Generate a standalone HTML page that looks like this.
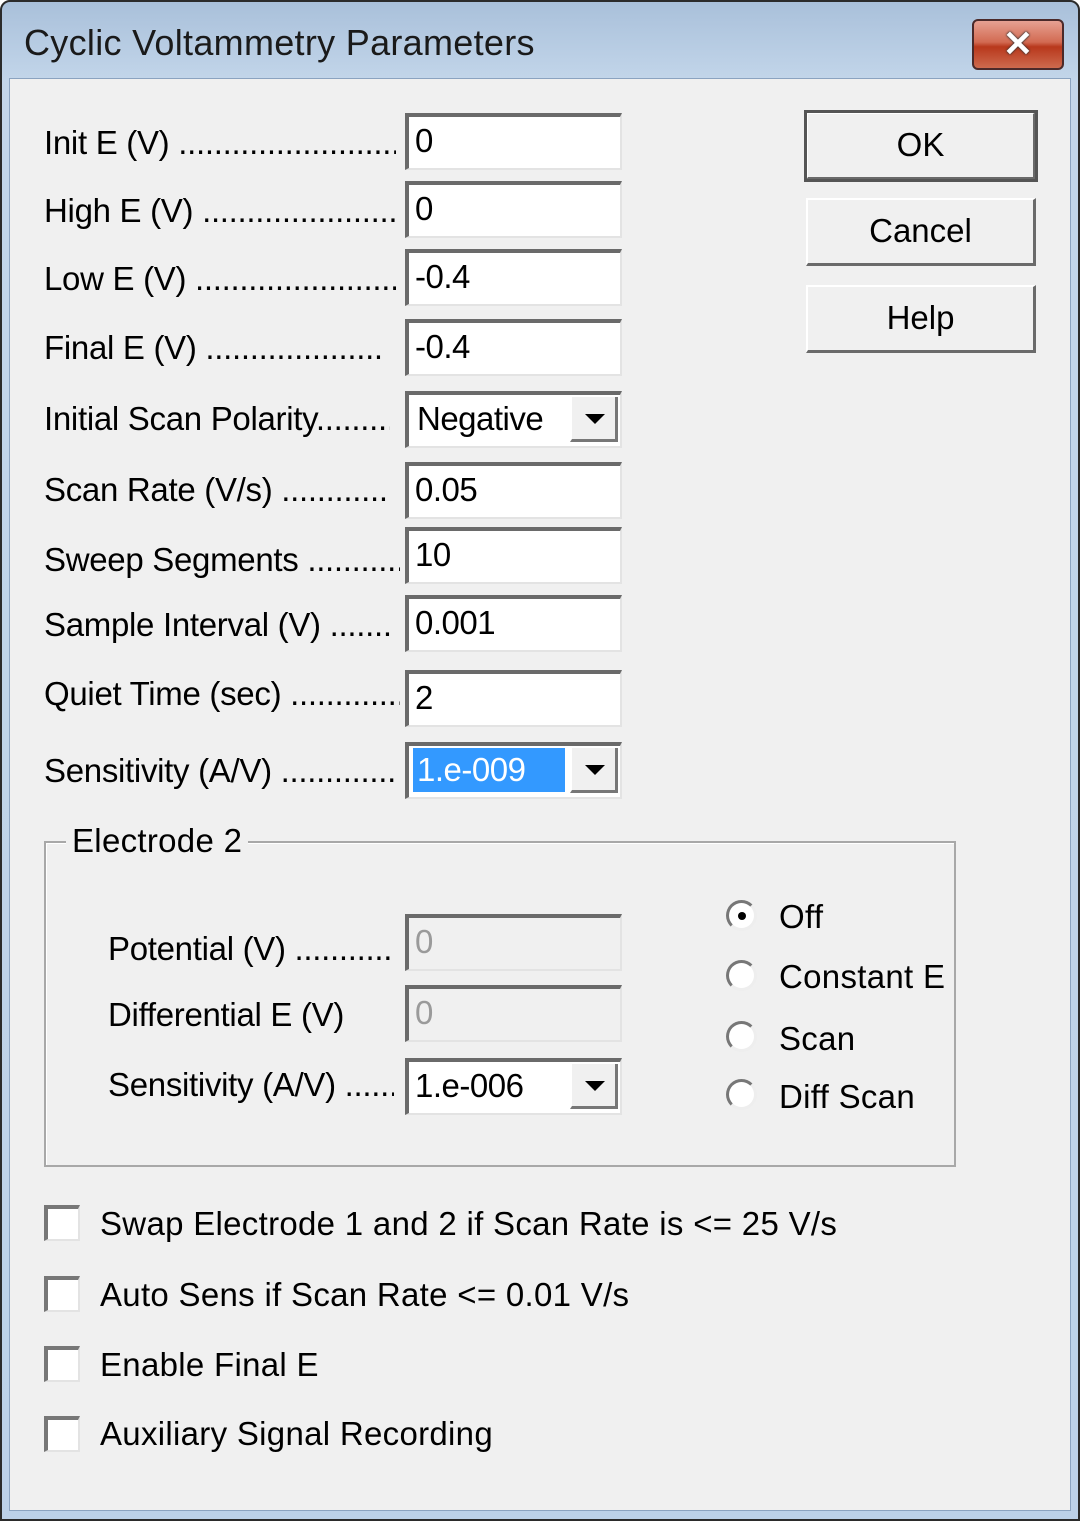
<!DOCTYPE html>
<html><head><style>
*{margin:0;padding:0;box-sizing:border-box}
body{width:1080px;height:1521px;background:#fff;position:relative;overflow:hidden;font-family:"Liberation Sans",sans-serif;color:#000}
.win{position:absolute;left:0;top:0;width:1080px;height:1521px;border:2px solid #2b2b2b;border-radius:10px 10px 0 0;background:linear-gradient(#a9c0da,#c3d6ea 80px,#bcd1e8);}
.title{position:absolute;left:22px;top:20px;font-size:36px;color:#1a1a1a;letter-spacing:0.3px}
.close{position:absolute;left:970px;top:17px;width:92px;height:51px;border:2px solid #4b2a2a;border-radius:6px;background:linear-gradient(#e7a192,#d26a52 45%,#b8381c 55%,#cd6a4e);color:#fff;font-size:36px;font-weight:bold;text-align:center;line-height:46px;text-shadow:0 0 2px #333,0 0 2px #333}
.client{position:absolute;left:9px;top:78px;width:1062px;height:1433px;background:#f0f0f0;border:1px solid #8ba3c0}
.t{position:absolute;font-size:33px;white-space:nowrap;letter-spacing:0.3px}
.lab{position:absolute;left:44px;width:352px;font-size:33px;white-space:nowrap;overflow:hidden;letter-spacing:-0.3px}
.in{position:absolute;left:405px;width:217px;height:57px;background:#fff;border-top:4px solid #6a6a6a;border-left:4px solid #6a6a6a;border-right:2px solid #e3e3e3;border-bottom:2px solid #e3e3e3;font-size:33px;padding-left:6px;line-height:48px;letter-spacing:-0.5px}
.dis{background:#f0f0f0;color:#9a9a9a}
.arr{position:absolute;right:2px;top:2px;width:48px;height:45px;background:#f0f0f0;border-left:2px solid #fff;border-bottom:3px solid #777;border-right:3px solid #777}
.arr:after{content:"";position:absolute;left:13px;top:17px;border-left:10px solid transparent;border-right:10px solid transparent;border-top:10px solid #000}
.btn{position:absolute;left:806px;width:230px;height:68px;background:#f0f0f0;border-top:2px solid #fff;border-left:2px solid #fff;border-right:3px solid #6a6a6a;border-bottom:3px solid #6a6a6a;text-align:center;font-size:33px;line-height:62px}
.ok{outline:3px solid #555;outline-offset:-1px}
.group{position:absolute;left:44px;top:841px;width:912px;height:326px;border:2px solid #a8a8a8;box-shadow:inset 1px 1px #fff}
.rad{position:absolute;left:726px;width:31px;height:31px;border-radius:50%;background:#fff;border:3px solid #777;border-right-color:#eee;border-bottom-color:#eee}
.cb{position:absolute;left:44px;width:36px;height:36px;background:#fff;border-top:4px solid #777;border-left:4px solid #777;border-right:2px solid #e3e3e3;border-bottom:2px solid #e3e3e3}
</style></head><body>
<div class="win">
<div class="title">Cyclic Voltammetry Parameters</div>
<div class="close">✕</div>
</div>
<div class="client"></div>

<div class="lab" style="top:124px">Init E (V) ................................</div>
<div class="lab" style="top:192px">High E (V) ..............................</div>
<div class="lab" style="top:260px">Low E (V) ...............................</div>
<div class="lab" style="top:329px;width:340px">Final E (V) .............................</div>
<div class="lab" style="top:400px;width:346px">Initial Scan Polarity................</div>
<div class="lab" style="top:471px;width:346px">Scan Rate (V/s) .......................</div>
<div class="lab" style="top:541px;width:356px">Sweep Segments ......................</div>
<div class="lab" style="top:606px;width:346px">Sample Interval (V) ..................</div>
<div class="lab" style="top:675px;width:356px">Quiet Time (sec) ......................</div>
<div class="lab" style="top:752px;width:350px">Sensitivity (A/V) ......................</div>

<div class="in" style="top:113px">0</div>
<div class="in" style="top:181px">0</div>
<div class="in" style="top:249px">-0.4</div>
<div class="in" style="top:319px">-0.4</div>
<div class="in" style="top:391px;padding-left:8px">Negative<div class="arr"></div></div>
<div class="in" style="top:462px">0.05</div>
<div class="in" style="top:527px">10</div>
<div class="in" style="top:595px">0.001</div>
<div class="in" style="top:670px">2</div>
<div class="in" style="top:742px;padding:2px 0 0 4px"><div style="background:#3399ff;color:#fff;width:152px;height:44px;line-height:44px;padding-left:4px">1.e-009</div><div class="arr"></div></div>

<div class="btn ok" style="top:112px">OK</div>
<div class="btn" style="top:198px">Cancel</div>
<div class="btn" style="top:285px">Help</div>

<div class="group"></div>
<div class="t" style="left:66px;top:822px;background:#f0f0f0;padding:0 6px">Electrode 2</div>
<div class="lab" style="left:108px;width:286px;top:930px">Potential (V) ...........................</div>
<div class="lab" style="left:108px;width:286px;top:996px">Differential E (V)</div>
<div class="lab" style="left:108px;width:286px;top:1066px">Sensitivity (A/V) ......................</div>
<div class="in dis" style="top:914px">0</div>
<div class="in dis" style="top:985px">0</div>
<div class="in" style="top:1058px">1.e-006<div class="arr"></div></div>

<div class="rad" style="top:900px"><div style="position:absolute;left:9px;top:9px;width:8px;height:8px;border-radius:50%;background:#000"></div></div>
<div class="rad" style="top:960px"></div>
<div class="rad" style="top:1021px"></div>
<div class="rad" style="top:1079px"></div>
<div class="t" style="left:779px;top:898px">Off</div>
<div class="t" style="left:779px;top:958px">Constant E</div>
<div class="t" style="left:779px;top:1020px">Scan</div>
<div class="t" style="left:779px;top:1078px">Diff Scan</div>

<div class="cb" style="top:1205px"></div>
<div class="cb" style="top:1276px"></div>
<div class="cb" style="top:1346px"></div>
<div class="cb" style="top:1416px"></div>
<div class="t" style="left:100px;top:1205px">Swap Electrode 1 and 2 if Scan Rate is &lt;= 25 V/s</div>
<div class="t" style="left:100px;top:1276px">Auto Sens if Scan Rate &lt;= 0.01 V/s</div>
<div class="t" style="left:100px;top:1346px">Enable Final E</div>
<div class="t" style="left:100px;top:1415px">Auxiliary Signal Recording</div>
</body></html>
